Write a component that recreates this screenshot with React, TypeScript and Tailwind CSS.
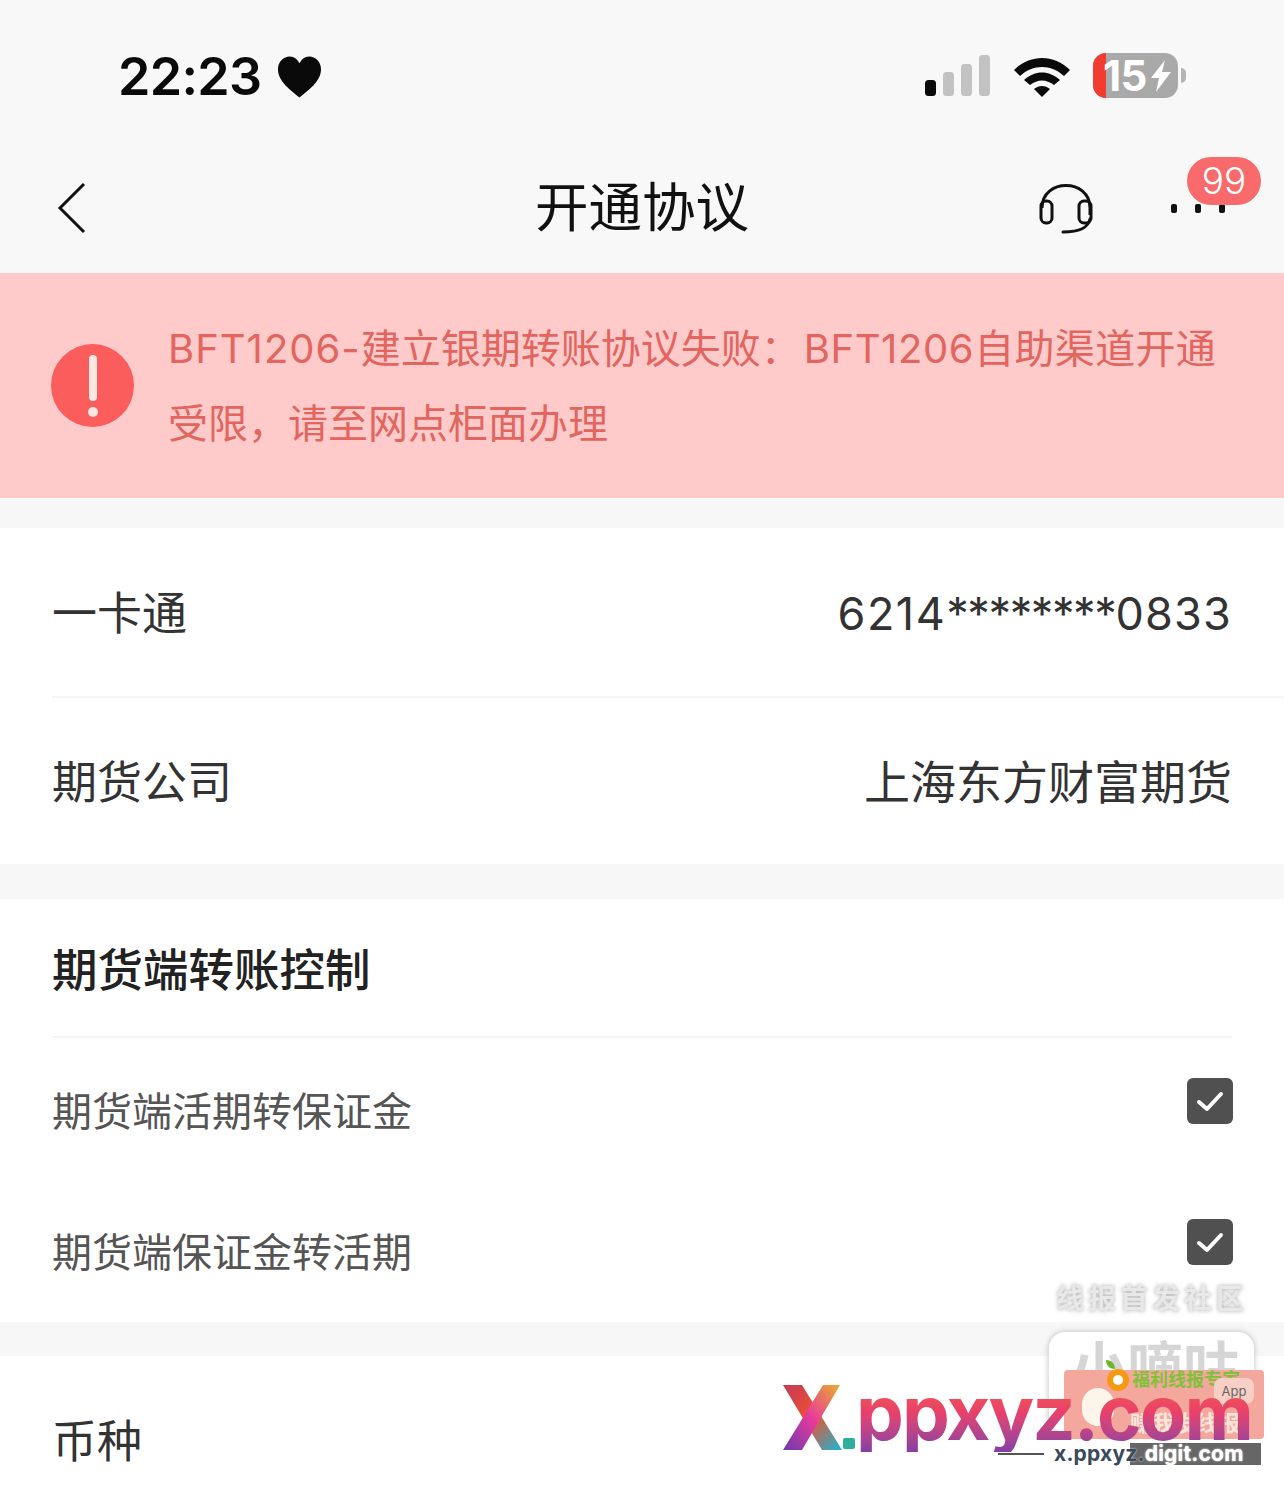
const font = '[font-family:Inter,"Noto_Sans_CJK_SC",sans-serif]';

function StatusBar() {
  return (
    <div className="h-[150px] flex items-start justify-between pl-[118px] pr-[97px] pt-[49px]">
      <div className="flex items-center gap-[16px]">
        <span className="text-[52px] leading-[56px] font-semibold text-[#0a0a0a] tracking-[-0.7px]">22:23</span>
        <svg width="45" height="44" viewBox="0 0 46 44"><path d="M23 43 C15 36 1 27 1 14 C1 6 7 1 13 1 C18 1 21 4 23 8 C25 4 28 1 33 1 C39 1 45 6 45 14 C45 27 31 36 23 43Z" fill="#0a0a0a" /></svg>
      </div>
      <div className="flex items-center gap-[22px] pt-[4px] -translate-x-[1px]">
        <svg width="66" height="42" viewBox="0 0 66 42">
          <rect x="0" y="25" width="11" height="16" rx="3.5" fill="#0a0a0a" />
          <rect x="18" y="17" width="11" height="24" rx="3.5" fill="#c2c2c2" />
          <rect x="36" y="9" width="11" height="32" rx="3.5" fill="#c2c2c2" />
          <rect x="54" y="0" width="11" height="41" rx="3.5" fill="#c2c2c2" />
        </svg>
        <svg width="58" height="42" viewBox="0 0 58 42">
          <path d="M1 15 C17 -1 41 -1 57 15 L51 21 C38 9 20 9 7 21Z" fill="#0a0a0a" />
          <path d="M11 25 C22 15 36 15 47 25 L41 30 C33 24 25 24 17 30Z" fill="#0a0a0a" />
          <path d="M21 34 C26 30 32 30 37 34 L29 42Z" fill="#0a0a0a" />
        </svg>
        <div className="flex items-center gap-[3px]">
          <div className="relative w-[85px] h-[45px] rounded-[13px] bg-[#a9a9a9] overflow-hidden flex items-center">
            <div className="w-[13px] h-full bg-[#f23c30]" />
            <span className="absolute left-[10px] top-0 text-[42px] leading-[45px] font-bold text-white tracking-[-0.5px]">15</span>
            <svg className="absolute left-[57px] top-[7px]" width="22" height="32" viewBox="0 0 22 32"><path d="M15 0 L1 18 H9 L6 32 L21 12 H12Z" fill="#fff" /></svg>
          </div>
          <div className="w-[5px] h-[15px] rounded-r-[5px] bg-[#b5b5b5]" />
        </div>
      </div>
    </div>
  );
}

function NavBar() {
  return (
    <div className="h-[123px] grid grid-cols-[1fr_auto_1fr] items-center px-[57px]">
      <svg width="30" height="52" viewBox="0 0 30 52" className="mb-[8px]"><path d="M27 2 L3 26 L27 50" fill="none" stroke="#111" strokeWidth="3" /></svg>
      <span className="text-[53.5px] leading-[60px] text-[#111] mb-[8px]">开通协议</span>
      <div className="flex items-center justify-end gap-[78px] mb-[8px]">
        <svg width="54" height="54" viewBox="0 0 54 54" fill="none" stroke="#111" strokeWidth="3">
          <path d="M3 27 C3 -3 51 -3 51 27 V34" />
          <rect x="2" y="20" width="11" height="22" rx="5" />
          <rect x="40" y="20" width="12" height="22" rx="5" />
          <path d="M51 38 C49 47 41 51 24 51" strokeLinecap="round" />
        </svg>
        <div className="relative w-[56px] h-[54px] flex items-center">
          <div className="flex gap-[18px] pt-[2px]">
            <div className="w-[6px] h-[9px] rounded-[2px] bg-[#111]" />
            <div className="w-[6px] h-[9px] rounded-[2px] bg-[#111]" />
            <div className="w-[6px] h-[9px] rounded-[2px] bg-[#111]" />
          </div>
          <div className="absolute left-[16px] top-[-24px] w-[74px] h-[48px] rounded-full bg-[#f96a6c] flex items-center justify-center text-[37px] leading-none font-light text-white">99</div>
        </div>
      </div>
    </div>
  );
}

function Banner() {
  return (
    <div className="h-[225px] bg-[#ffcaca] flex items-center pl-[51px] pr-[60px] gap-[34px]">
      <div className="shrink-0 w-[83px] h-[83px] rounded-full bg-[#fb5c5c] flex flex-col items-center justify-center gap-[6px]">
        <div className="w-[8px] h-[46px] rounded-full bg-[#ffe6e0]" />
        <div className="w-[10px] h-[10px] rounded-full bg-[#ffe6e0]" />
      </div>
      <p className="text-[40px] leading-[75px] text-[#e2655f]">
        <span className="tracking-[1px]">BFT1206-</span>建立银期转账协议失败<span className="tracking-[3px]">：</span><span className="tracking-[0.6px]">BFT1206</span><span className="tracking-[0.3px]">自助渠道开通</span>受限，请至网点柜面办理
      </p>
    </div>
  );
}

function Row({ label, value, border }: { label: string; value: React.ReactNode; border?: boolean }) {
  return (
    <div className={`pl-[52px] ${border ? "h-[170px]" : "h-[166px]"}`}>
      <div className={`h-full flex items-center justify-between pr-[52px] pt-[3px] text-[45px] text-[#333] ${border ? "border-b-2 border-[#f5f5f5]" : ""}`}>
        <span>{label}</span>
        {value}
      </div>
    </div>
  );
}

function Check({ label }: { label: string }) {
  return (
    <div className="h-[141px] flex items-start justify-between">
      <span className="text-[40px] leading-[48px] text-[#555] pt-[50px]">{label}</span>
      <div className="mt-[40px] mr-[-1px] w-[46px] h-[46px] rounded-[6px] bg-[#505050] flex items-center justify-center">
        <svg width="28" height="24" viewBox="0 0 28 24"><path d="M3 13 L11 20 L25 5" fill="none" stroke="#fff" strokeWidth="4" strokeLinecap="round" strokeLinejoin="round" /></svg>
      </div>
    </div>
  );
}

function Watermark() {
  return (
    <div className="absolute left-0 right-0 top-[1270px] h-[220px] overflow-hidden pointer-events-none">
      <div className="absolute left-[1056px] top-[13px] text-[28px] leading-[32px] font-bold tracking-[4px] text-[#e8e8e8] [text-shadow:0_0_4px_#aaa] whitespace-nowrap">线报首发社区</div>
      <div className="absolute left-[1049px] top-[62px] w-[205px] h-[100px] rounded-[16px] bg-white shadow-[0_0_6px_#bbb] pl-[22px] text-[56px] leading-[72px] font-bold text-[#d6d6d6] overflow-hidden whitespace-nowrap">小嘀咕</div>
      <div className="absolute left-[1064px] top-[100px] w-[200px] h-[69px] rounded-[4px] bg-[#f4a79c] overflow-hidden">
        <div className="absolute left-[68px] top-[0px] text-[18px] leading-[20px] font-bold text-[#7fc13b] whitespace-nowrap">福利线报专家</div>
        <div className="absolute left-[150px] top-[8px] w-[40px] h-[26px] rounded-[8px] bg-[#f8cfc6] text-[13px] leading-[26px] text-center text-[#666]">App</div>
        <div className="absolute left-[18px] top-[18px] w-[32px] h-[38px] rounded-full bg-[#fdf4ea]" />
        <div className="absolute left-[66px] top-[40px] text-[22px] leading-[26px] font-bold text-[#fbe6dc] whitespace-nowrap">赚我发线报</div>
      </div>
      <svg className="absolute left-[1103px] top-[88px]" width="32" height="34" viewBox="0 0 32 34">
        <path d="M3 2 C9 2 12 6 12 11 C7 11 3 8 3 2Z" fill="#6fb52c" />
        <circle cx="15" cy="22" r="11" fill="#f39a12" />
        <circle cx="15" cy="22" r="5" fill="#fff" />
      </svg>
      <svg className="absolute left-[782px] top-[114px]" width="62" height="68" viewBox="0 0 62 68">
        <defs>
          <linearGradient id="xa" x1="0" y1="0" x2="1" y2="1"><stop offset="0" stopColor="#c43a5a" /><stop offset="0.5" stopColor="#f0522f" /><stop offset="1" stopColor="#16b6d6" /></linearGradient>
          <linearGradient id="xb" x1="1" y1="0" x2="0" y2="1"><stop offset="0" stopColor="#e8b02a" /><stop offset="0.5" stopColor="#e93a9a" /><stop offset="1" stopColor="#6a3bb0" /></linearGradient>
        </defs>
        <path d="M1 1 H20 L60 66 H40Z" fill="url(#xa)" />
        <path d="M41 1 H58 L20 66 H1Z" fill="url(#xb)" />
      </svg>
      <div className="absolute left-[843px] top-[168px] w-[12px] h-[11px] rounded-[2px] bg-[#2fae9c]" />
      <div className="absolute left-[856px] top-[98px] w-[400px] h-[84px] overflow-hidden">
        <div className="text-[76px] leading-[88px] font-bold tracking-[-2px] whitespace-nowrap bg-gradient-to-b from-[#f46a25] via-[#ea3f6a] to-[#7d3aa8] bg-clip-text text-transparent">ppxyz.com</div>
      </div>
      <div className="absolute left-[1130px] top-[173px] w-[131px] h-[22px] bg-[#555]/90" />
      <div className="absolute left-[998px] top-[183px] w-[46px] h-[2px] bg-[#555]" />
      <div className="absolute left-[1054px] top-[172px] text-[21px] leading-[24px] font-bold tracking-[0.2px] text-[#3a4a5a] [text-shadow:0_0_2px_#fff] whitespace-nowrap">x.ppxyz.<span className="text-white">digit.com</span></div>
    </div>
  );
}

export default function App() {
  return (
    <div className={`relative w-[1284px] h-[1490px] overflow-hidden bg-[#f7f7f7] ${font}`}>
      <div className="bg-[#f8f8f8]">
        <StatusBar />
        <NavBar />
      </div>
      <Banner />
      <div className="h-[30px]" />
      <div className="bg-white">
        <Row label="一卡通" border value={<span><span className="tracking-[1.5px]">6214</span><span className="tracking-[-1.4px]">********</span><span className="tracking-[1.2px]">0833</span></span>} />
        <Row label="期货公司" value={<span className="text-[46px]">上海东方财富期货</span>} />
      </div>
      <div className="h-[35px]" />
      <div className="bg-white h-[423px] px-[52px]">
        <div className="h-[139px] flex items-center pt-[7px] border-b-2 border-[#f5f5f5] text-[45.5px] font-medium text-[#222]">期货端转账控制</div>
        <Check label="期货端活期转保证金" />
        <Check label="期货端保证金转活期" />
      </div>
      <div className="h-[34px]" />
      <div className="bg-white h-[172px] px-[52px] flex items-center text-[45px] text-[#333]">币种</div>
      <Watermark />
    </div>
  );
}
